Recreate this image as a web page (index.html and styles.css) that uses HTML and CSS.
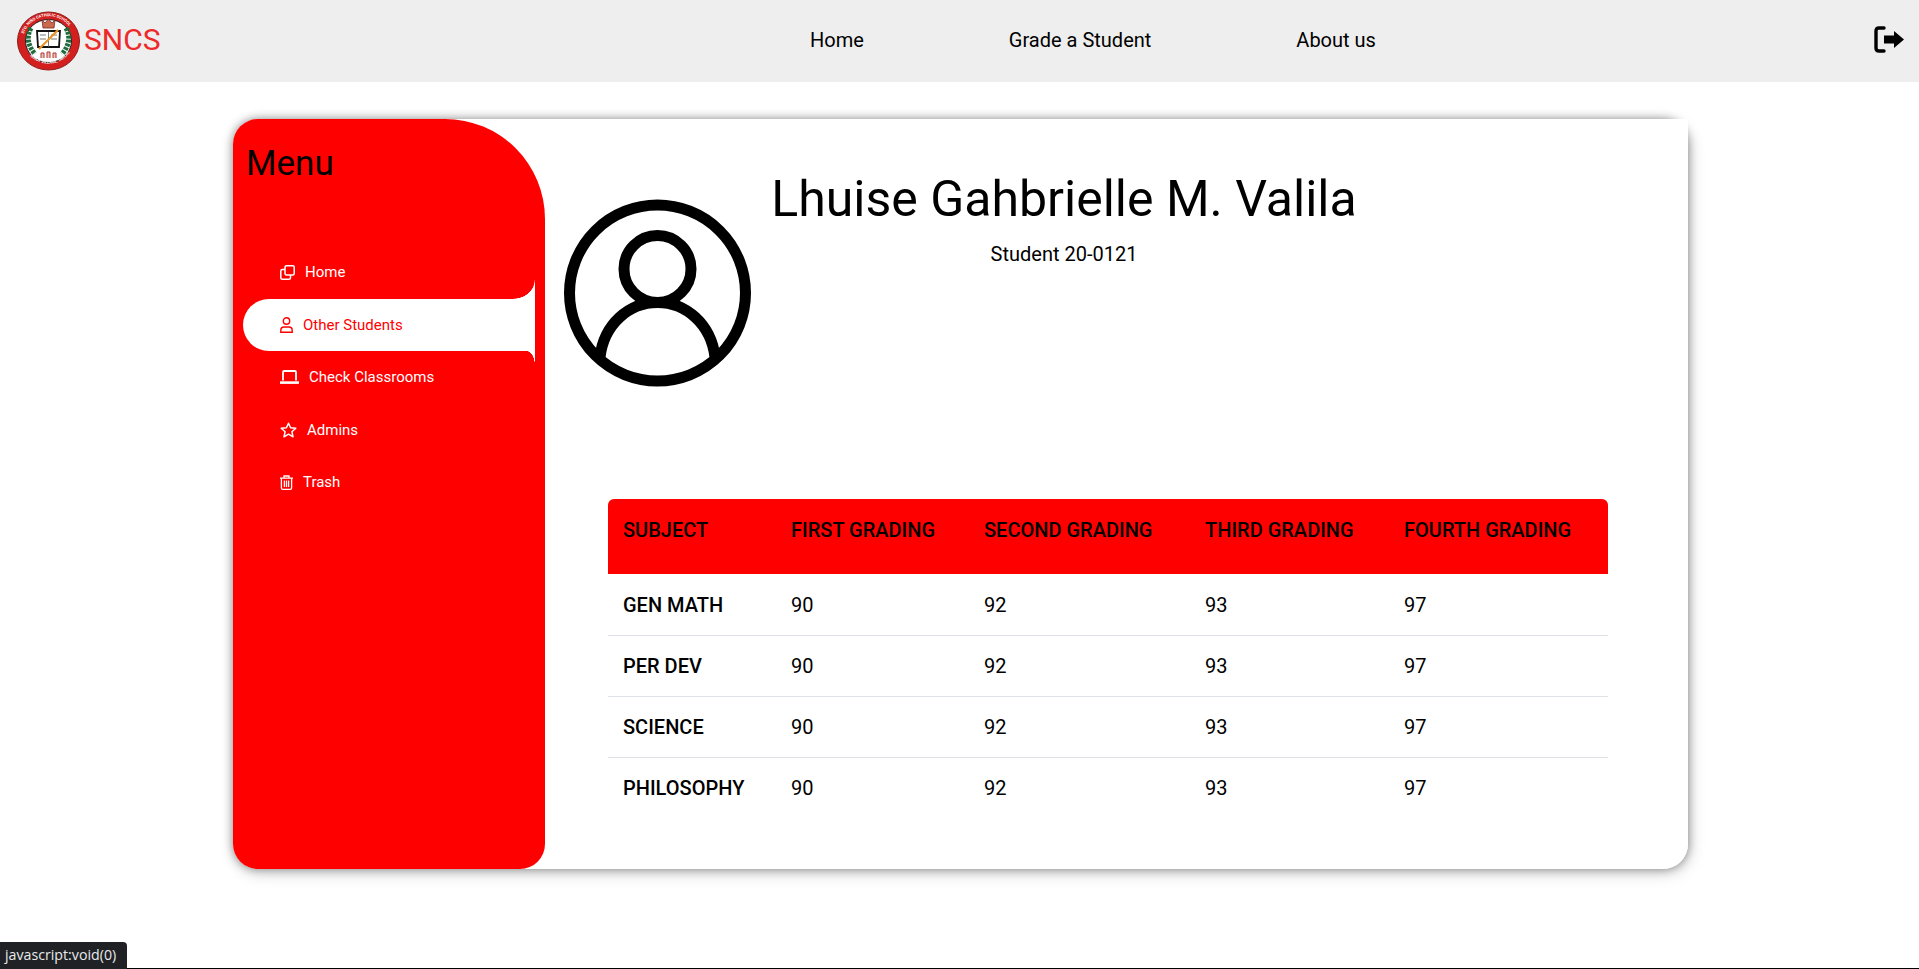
FILE: index.html
```html
<!DOCTYPE html>
<html lang="en">
  <head>
    <meta charset="UTF-8" />
    <meta name="viewport" content="width=device-width, initial-scale=1.0" />
    <title>SNCS</title>
    <link rel="stylesheet" href="styles.css">
  </head>
  <body>
    <!-- Top bar -->
    <header class="topbar">
      <a class="brand" href="#">
        <svg class="brand-logo" width="63" height="60" viewBox="0 0 63 60">
          <defs>
            <path id="sealTop" d="M6.5 24 A26 26 0 0 1 56.5 24" />
            <path id="sealBottom" d="M10 41 A25.5 25.5 0 0 0 53 41" />
          </defs>
          <ellipse cx="31.5" cy="30" rx="31" ry="29" fill="#d3201f" stroke="#8f1d1a" />
          <ellipse cx="31.5" cy="30" rx="23" ry="21.5" fill="#fff" stroke="#222" />
          <text class="seal-text"><textPath href="#sealTop" startOffset="1">STO. NIÑO CATHOLIC SCHOOL</textPath></text>
          <text class="seal-text"><textPath href="#sealBottom" startOffset="5">NINOY VILLAGE, TARLAC</textPath></text>
          <path d="M14 17 Q7 30 18 43" fill="none" stroke="#1f6b3c" stroke-width="5" stroke-dasharray="3 1" />
          <path d="M49 17 Q56 30 45 43" fill="none" stroke="#1f6b3c" stroke-width="5" stroke-dasharray="3 1" />
          <path d="M20 20 H43 L42 36 H21 Z" fill="#fff" stroke="#111" stroke-width="1.8" />
          <path d="M31.5 21 V36 M23 24 H29 M23 28 H29 M34 24 H40 M34 28 H40" stroke="#555" stroke-width="0.8" />
          <path d="M25 9 L28 12 L31.5 8 L35 12 L38 9 L37 17 H26 Z" fill="#c9694e" stroke="#7a2a22" stroke-width="0.8" />
          <path d="M22 38 L41 19" stroke="#e8931e" stroke-width="2.2" />
          <path d="M24 47 V42 H27 V47 M30 47 V41 H33 V47 M36 47 V42 H39 V47" fill="#e9c4be" stroke="#b5362f" stroke-width="1" />
        </svg>
        <span class="brand-name">SNCS</span>
      </a>
      <nav class="toplinks">
        <a href="#">Home</a>
        <a href="#">Grade a Student</a>
        <a href="#">About us</a>
      </nav>
      <a class="logout" href="#">
        <svg width="31" height="27" viewBox="0 0 31 27">
          <path d="M10 2 H5 Q2 2 2 5 V22 Q2 25 5 25 H10" fill="none" stroke="#000" stroke-width="3.4" stroke-linecap="round" />
          <path d="M10 9.5 H20 V5 L30 13.5 L20 22 V17.5 H10 Z" fill="#000" />
        </svg>
      </a>
    </header>

    <div class="card">
      <!-- Sidebar -->
      <aside class="sidebar">
        <h2 class="menu-title">Menu</h2>
        <ul class="menu">
          <li class="menu-item">
            <svg width="15" height="15" viewBox="0 0 15 15" fill="none" stroke="currentColor" stroke-width="1.5">
              <rect x="5" y="0.8" width="9.2" height="9.2" rx="1.5" />
              <path d="M5 4.5 H2.3 Q0.8 4.5 0.8 6 V12.7 Q0.8 14.2 2.3 14.2 H9 Q10.5 14.2 10.5 12.7 V10" />
            </svg>
            <span>Home</span>
          </li>
          <li class="menu-item active">
            <svg width="13" height="16" viewBox="0 0 13 16" fill="none" stroke="currentColor" stroke-width="1.4">
              <circle cx="6.5" cy="4" r="3.2" />
              <path d="M0.8 15.2 V13.5 Q0.8 10 4 10 H9 Q12.2 10 12.2 13.5 V15.2 Z" />
            </svg>
            <span>Other Students</span>
          </li>
          <li class="menu-item">
            <svg width="19" height="14" viewBox="0 0 19 14" fill="none" stroke="currentColor" stroke-width="1.8">
              <path d="M3 10.5 V2.2 Q3 1 4.2 1 H14.8 Q16 1 16 2.2 V10.5" />
              <path d="M0 12.6 H19" stroke-width="2.6" />
            </svg>
            <span>Check Classrooms</span>
          </li>
          <li class="menu-item">
            <svg width="17" height="16" viewBox="0 0 17 16" fill="none" stroke="currentColor" stroke-width="1.5" stroke-linejoin="round">
              <path d="M8.5 1.2 L10.6 5.8 L15.8 6.3 L11.9 9.7 L13 14.8 L8.5 12.2 L4 14.8 L5.1 9.7 L1.2 6.3 L6.4 5.8 Z" />
            </svg>
            <span>Admins</span>
          </li>
          <li class="menu-item">
            <svg width="13" height="15" viewBox="0 0 13 15" fill="none" stroke="currentColor" stroke-width="1.3">
              <path d="M0 3.2 H13 M4 3 V1 H9 V3" />
              <path d="M1.4 3.2 V13 Q1.4 14.3 2.7 14.3 H10.3 Q11.6 14.3 11.6 13 V3.2" />
              <path d="M4.4 5.5 V12 M6.5 5.5 V12 M8.6 5.5 V12" />
            </svg>
            <span>Trash</span>
          </li>
        </ul>
      </aside>

      <!-- Student grades -->
      <main class="content">
        <section class="profile">
          <svg class="avatar" width="188" height="188" viewBox="0 0 188 188" fill="none" stroke="#000" stroke-width="11">
            <circle cx="93.5" cy="94" r="88" />
            <circle cx="93.5" cy="70" r="33.5" />
            <path d="M36 158 C40 125 65 103.5 93.5 103.5 S147 125 151 158" />
          </svg>
          <div class="profile-info">
            <h1 class="student-name">Lhuise Gahbrielle M. Valila</h1>
            <p class="student-id">Student 20-0121</p>
          </div>
        </section>

        <table class="grades">
          <thead>
            <tr>
              <th class="col-subject">SUBJECT</th>
              <th class="col-first">FIRST GRADING</th>
              <th class="col-second">SECOND GRADING</th>
              <th class="col-third">THIRD GRADING</th>
              <th>FOURTH GRADING</th>
            </tr>
          </thead>
          <tbody>
            <tr><th>GEN MATH</th><td>90</td><td>92</td><td>93</td><td>97</td></tr>
            <tr><th>PER DEV</th><td>90</td><td>92</td><td>93</td><td>97</td></tr>
            <tr><th>SCIENCE</th><td>90</td><td>92</td><td>93</td><td>97</td></tr>
            <tr><th>PHILOSOPHY</th><td>90</td><td>92</td><td>93</td><td>97</td></tr>
          </tbody>
        </table>
      </main>
    </div>

    <div class="page-line"></div>
    <div class="status-tip">javascript:void(0)</div>
  </body>
</html>
```

FILE: styles.css
```css
* {
  margin: 0;
  padding: 0;
  box-sizing: border-box;
  font-family: Roboto, Arial, sans-serif;
}

body {
  height: 969px;
  overflow: hidden;
  background-color: #fff;
  color: #000;
}

a {
  color: inherit;
  text-decoration: none;
}

/* top bar */
.topbar {
  display: flex;
  align-items: center;
  height: 82px;
  padding: 0 14px 0 17px;
  background-color: #eee;
}

.brand {
  display: flex;
  align-items: center;
  gap: 4px;
  width: 160px;
}

.brand-logo {
  flex-shrink: 0;
}

.seal-text {
  font-size: 4px;
  font-weight: 700;
  fill: #fff;
}

.brand-name {
  font-size: 30px;
  color: #ed2a2a;
  margin-top: -4px;
}

.toplinks {
  display: flex;
  gap: 145px;
  margin-left: 633px;
  font-size: 20px;
  margin-top: -2px;
}

.logout {
  display: flex;
  margin-left: auto;
  margin-top: -4px;
}

/* card */
.card {
  display: flex;
  width: 1455px;
  height: 750px;
  margin: 37px 0 0 233px;
  background-color: #fff;
  border-radius: 25px;
  box-shadow: 0 0 10px rgba(0, 0, 0, 0.4), 2px 4px 16px rgba(0, 0, 0, 0.18);
}

.sidebar {
  width: 312px;
  flex-shrink: 0;
  padding-left: 10px;
  background-color: #f00;
  border-radius: 25px 100px 25px 25px;
}

.menu-title {
  height: 127px;
  padding: 24px 0 0 4px;
  font-size: 35px;
  font-weight: 400;
  line-height: 41px;
  margin-left: -1px;
}

.menu {
  list-style: none;
  width: 292px;
}

.menu-item {
  position: relative;
  display: flex;
  align-items: center;
  gap: 10px;
  height: 52.5px;
  padding-left: 37px;
  font-size: 15px;
  color: #fff;
}

.menu-item.active {
  background-color: #fff;
  border-radius: 26px 0 0 26px;
  color: #f00;
}

/* little curved tips above and below the active row */
.menu-item.active::before {
  content: "";
  position: absolute;
  right: 0;
  top: -19px;
  width: 22px;
  height: 19px;
  background: radial-gradient(ellipse 22px 19px at 0 0, #f00 97%, #fff 100%);
}

.menu-item.active::after {
  content: "";
  position: absolute;
  right: 0;
  bottom: -15px;
  width: 8px;
  height: 15px;
  background: radial-gradient(ellipse 8px 15px at 0 100%, #f00 97%, #fff 100%);
}

/* main area, square at the top right where it sits over the card corner */
.content {
  flex: 1;
  padding: 45px 0 0 63px;
  background-color: #fff;
  border-radius: 0 0 25px 0;
}

.profile {
  display: flex;
  height: 335px;
  margin-left: -44px;
}

.avatar {
  flex-shrink: 0;
  margin-top: 35px;
}

.profile-info {
  width: 626px;
  margin-left: -1px;
  text-align: center;
}

.student-name {
  font-size: 50px;
  font-weight: 400;
  line-height: 70px;
}

.student-id {
  margin-top: 8px;
  font-size: 20px;
  line-height: 24px;
}

.grades {
  width: 1000px;
  border-collapse: collapse;
  table-layout: fixed;
  font-size: 20px;
}

.grades thead tr {
  background-color: #f00;
}

.grades thead th:first-child {
  border-top-left-radius: 6px;
}

.grades thead th:last-child {
  border-top-right-radius: 6px;
}

.grades th,
.grades td {
  padding: 0 15px;
  text-align: left;
}

.grades th {
  font-weight: 500;
}

.grades thead th {
  height: 75px;
  padding-bottom: 13px;
}

.grades tbody tr {
  height: 61px;
  border-bottom: 1px solid #dee2e6;
}

.grades tbody tr:first-child th,
.grades tbody tr:first-child td {
  padding-top: 2px;
}

.grades tbody tr:last-child {
  border-bottom: 0;
}

.col-subject {
  width: 168px;
}

.col-first {
  width: 193px;
}

.col-second {
  width: 221px;
}

.col-third {
  width: 199px;
}

/* browser status overlay */
.page-line {
  position: fixed;
  left: 0;
  right: 0;
  bottom: 0;
  height: 1px;
  background-color: #000;
}

.status-tip {
  position: fixed;
  left: 0;
  bottom: 0;
  height: 27px;
  padding: 0 11px 0 5px;
  background-color: #202124;
  border-top-right-radius: 4px;
  color: #e8eaed;
  font-family: "Open Sans", sans-serif;
  font-size: 14.2px;
  line-height: 26px;
}
```
